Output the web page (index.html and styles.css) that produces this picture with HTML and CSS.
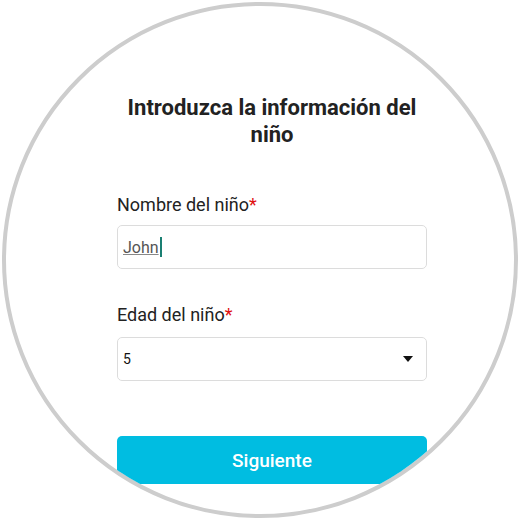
FILE: index.html
```html
<!DOCTYPE html>
<html lang="es">
<head>
<meta charset="utf-8">
<link rel="stylesheet" href="styles.css">
</head>
<body>
<div class="circle">
  <form class="form">
    <h1 class="title">Introduzca la información del niño</h1>
    <label class="label">Nombre del niño<span class="req">*</span></label>
    <div class="field"><span class="typed">John</span><span class="caret"></span></div>
    <label class="label label-age">Edad del niño<span class="req">*</span></label>
    <div class="field select"><span class="value">5</span><span class="arrow"></span></div>
    <button type="button" class="btn">Siguiente</button>
  </form>
</div>
</body>
</html>
```
FILE: styles.css
```css
html, body { margin: 0; padding: 0; background: #fff; }
body { width: 520px; height: 520px; overflow: hidden; font-family: Roboto, "Liberation Sans", sans-serif; }
.circle {
  box-sizing: border-box;
  width: 516px;
  height: 516px;
  margin: 2px;
  border: 4px solid #cdcdcd;
  border-radius: 50%;
  overflow: hidden;
  background: #fff;
}
.form {
  width: 310px;
  margin-left: 111px;
  padding-top: 88px;
  display: flex;
  flex-direction: column;
}
.title {
  margin: 0;
  font-size: 22px;
  line-height: 27px;
  font-weight: 700;
  color: #222;
  text-align: center;
}
.label {
  margin-top: 46px;
  font-size: 18px;
  line-height: 22px;
  color: #222;
}
.label-age { margin-top: 35px; }
.req { color: #e01010; }
.field {
  box-sizing: border-box;
  margin-top: 9px;
  height: 44px;
  border: 1px solid #dcdcdc;
  border-radius: 5px;
  display: flex;
  align-items: center;
  padding: 0 12px 0 5px;
}
.typed {
  font-size: 16px;
  color: #555;
  text-decoration: underline;
  text-decoration-color: #888;
}
.caret {
  width: 2px;
  height: 20px;
  background: #1a7f72;
  margin-left: 1px;
}
.select { justify-content: space-between; margin-top: 11px; }
.value { font-size: 14px; color: #111; }
.arrow {
  width: 0; height: 0;
  border-left: 5px solid transparent;
  border-right: 5px solid transparent;
  border-top: 6px solid #111;
  margin-right: 1px;
}
.btn {
  margin-top: 55px;
  height: 48px;
  border: none;
  border-radius: 5px;
  background: #00bde1;
  color: #fff;
  font-family: Roboto, "Liberation Sans", sans-serif;
  font-size: 19px;
  font-weight: 500;
  padding: 0;
}
```
